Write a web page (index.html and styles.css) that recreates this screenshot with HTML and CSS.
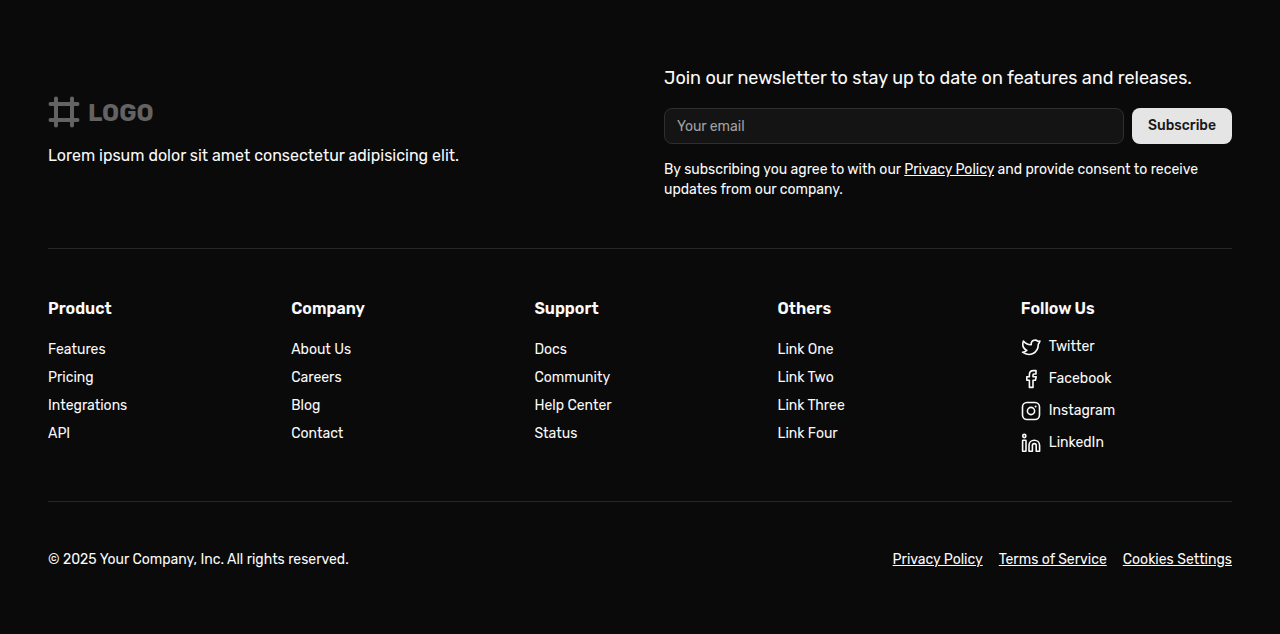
FILE: index.html
```html
<!DOCTYPE html>
<html lang="en">
<head>
  <meta charset="utf-8">
  <meta name="viewport" content="width=device-width, initial-scale=1">
  <title>Your Company</title>
  <link rel="stylesheet" href="styles.css">
</head>
<body>
  <footer class="footer">
    <section class="intro">
      <div class="brand">
        <a class="logo" href="#" aria-label="Logo">
          <svg class="logo-mark" viewBox="0 0 32 32" aria-hidden="true">
            <path d="M8 2.500V29.500M24 2.500V29.500M2.500 8H29.500M2.500 24H29.500"/>
          </svg>
          <span class="logo-text">LOGO</span>
        </a>
        <p class="tagline">Lorem ipsum dolor sit amet consectetur adipisicing elit.</p>
      </div>
      <form class="newsletter">
        <label class="newsletter-title" for="email">Join our newsletter to stay up to date on features and releases.</label>
        <div class="newsletter-row">
          <input class="email" id="email" type="email" placeholder="Your email">
          <button class="subscribe" type="submit">Subscribe</button>
        </div>
        <p class="consent">By subscribing you agree to with our <a class="legal-link" href="#">Privacy Policy</a> and provide consent to receive updates from our company.</p>
      </form>
    </section>

    <nav class="columns" aria-label="Footer">
      <div class="column">
        <h2 class="column-title">Product</h2>
        <ul class="links">
          <li><a href="#">Features</a></li>
          <li><a href="#">Pricing</a></li>
          <li><a href="#">Integrations</a></li>
          <li><a href="#">API</a></li>
        </ul>
      </div>
      <div class="column">
        <h2 class="column-title">Company</h2>
        <ul class="links">
          <li><a href="#">About Us</a></li>
          <li><a href="#">Careers</a></li>
          <li><a href="#">Blog</a></li>
          <li><a href="#">Contact</a></li>
        </ul>
      </div>
      <div class="column">
        <h2 class="column-title">Support</h2>
        <ul class="links">
          <li><a href="#">Docs</a></li>
          <li><a href="#">Community</a></li>
          <li><a href="#">Help Center</a></li>
          <li><a href="#">Status</a></li>
        </ul>
      </div>
      <div class="column">
        <h2 class="column-title">Others</h2>
        <ul class="links">
          <li><a href="#">Link One</a></li>
          <li><a href="#">Link Two</a></li>
          <li><a href="#">Link Three</a></li>
          <li><a href="#">Link Four</a></li>
        </ul>
      </div>
      <div class="column column-social">
        <h2 class="column-title">Follow Us</h2>
        <ul class="social">
          <li><a class="social-link" href="#">
            <svg class="icon" viewBox="0 0 20 20" aria-hidden="true"><path d="M18.900 4C18.200 4.200 17.500 4.300 16.700 4.200C15.300 2.500 10.300 2.600 10.200 6.800V7.800C7 7.900 4.300 6.500 2.400 4C1.200 7.500 2 11.400 5.800 13.400C4.600 14.500 3.200 15.100 1.500 15.200C8.500 20.200 17.300 16.200 17.300 7.200C17.900 6.400 18.600 5.300 18.900 4Z"/></svg>
            <span>Twitter</span></a></li>
          <li><a class="social-link" href="#">
            <svg class="icon" viewBox="0 0 20 20" aria-hidden="true"><path d="M15 1.600H12.400C10 1.600 8.400 3.200 8.400 5.500V7.700H5.800V11.200H8.400V18.400H12V11.200H14.400L15.200 7.700H12V5.800C12 5.300 12.300 5 12.800 5H15Z"/></svg>
            <span>Facebook</span></a></li>
          <li><a class="social-link" href="#">
            <svg class="icon" viewBox="0 0 20 20" aria-hidden="true"><rect x="1.500" y="1.500" width="17" height="17" rx="4.500"/><circle cx="10" cy="10" r="3.600"/><circle class="icon-dot" cx="14.600" cy="5.400" r="1"/></svg>
            <span>Instagram</span></a></li>
          <li><a class="social-link" href="#">
            <svg class="icon" viewBox="0 0 20 20" aria-hidden="true"><circle cx="3.300" cy="3" r="1.600"/><rect x="1.600" y="7.300" width="3.400" height="11" rx=".5"/><path d="M8 18.300V12.500C8 5.500 18.600 5.500 18.600 12.500V18.300H15.200V12.500C15.200 10 11.400 10 11.400 12.500V18.300Z"/></svg>
            <span>LinkedIn</span></a></li>
        </ul>
      </div>
    </nav>

    <div class="bottom">
      <p class="copyright">© 2025 Your Company, Inc. All rights reserved.</p>
      <ul class="legal">
        <li><a class="legal-link" href="#">Privacy Policy</a></li>
        <li><a class="legal-link" href="#">Terms of Service</a></li>
        <li><a class="legal-link" href="#">Cookies Settings</a></li>
      </ul>
    </div>
  </footer>
</body>
</html>
```
FILE: styles.css
```css
*, *::before, *::after { box-sizing: border-box; }

body {
  margin: 0;
  background: #0a0a0a;
  color: #fafafa;
  font: 14px/20px Rubik, Inter, "Noto Sans", sans-serif;
}

h2, p, ul { margin: 0; padding: 0; }
ul { list-style: none; }
a { color: inherit; text-decoration: none; }

.footer { padding: 64px 48px; }

.intro {
  display: grid;
  grid-template-columns: 1fr 1fr;
  gap: 48px;
  align-items: center;
  padding-bottom: 48px;
}

.logo {
  display: flex;
  align-items: center;
  gap: 8px;
  width: fit-content;
  color: #636363;
}

.logo-mark {
  width: 32px;
  height: 32px;
  fill: none;
  stroke: currentColor;
  stroke-width: 4;
  stroke-linecap: round;
}

.logo-text { padding-top: 2px; font-size: 24px; line-height: 30px; font-weight: 700; }
.tagline { margin-top: 16px; font-size: 16px; line-height: 24px; }

.newsletter { display: flex; flex-direction: column; }
.newsletter-title { font-size: 18px; line-height: 28px; }
.newsletter-row { display: flex; gap: 8px; margin: 16px 0; }

.email {
  flex: 1;
  min-width: 0;
  height: 36px;
  padding: 4px 12px;
  border: 1px solid #2f2f2f;
  border-radius: 8px;
  background: #141414;
  color: inherit;
  font: inherit;
}

.email::placeholder { color: #a1a1a1; opacity: 1; }

.subscribe {
  height: 36px;
  padding: 0 16px;
  border: 0;
  border-radius: 8px;
  background: #e5e5e5;
  color: #171717;
  font: inherit;
  font-weight: 500;
}

.legal-link { text-decoration: underline; }

.columns {
  display: grid;
  grid-template-columns: repeat(5, 1fr);
  gap: 32px;
  padding: 48px 0;
  border: solid #262626;
  border-width: 1px 0;
}

.column-title { font-size: 16px; line-height: 24px; font-weight: 600; }
.links { display: grid; gap: 8px; margin-top: 19px; }
.social { display: grid; gap: 12px; margin-top: 16px; }
.social-link { display: flex; gap: 8px; align-items: center; }

.icon {
  width: 20px;
  height: 20px;
  fill: none;
  stroke: currentColor;
  stroke-width: 1.6;
  stroke-linejoin: round;
}

.icon-dot { fill: currentColor; stroke: none; }

.bottom {
  display: flex;
  justify-content: space-between;
  padding-top: 48px;
}

.legal { display: flex; gap: 16px; }
```
